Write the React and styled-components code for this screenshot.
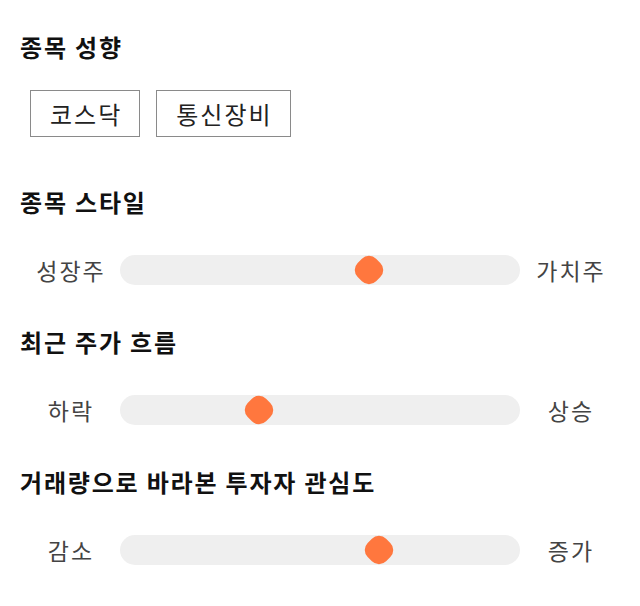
import React from "react";
import styled, { createGlobalStyle } from "styled-components";

const GlobalStyle = createGlobalStyle`
  body {
    margin: 0;
    background: #fff;
    font-family: "Noto Sans CJK KR", "Noto Sans", sans-serif;
  }
`;

const Page = styled.div`
  padding: 32px 20px 0;
  width: 600px;
`;

const Section = styled.section`
  display: flex;
  flex-direction: column;
  margin-bottom: ${(p) => p.$gap || 0}px;
`;

const Heading = styled.h2`
  margin: 0;
  font-size: 24px;
  line-height: 30px;
  letter-spacing: 1.8px;
  font-weight: 700;
  color: #111;
`;

const TagList = styled.div`
  display: flex;
  gap: 16px;
  margin-top: 28px;
  padding-left: 10px;
`;

const Tag = styled.div`
  height: 45px;
  padding: 0 17px 0 19px;
  border: 1px solid #8a8a8a;
  display: flex;
  align-items: center;
  font-size: 24px;
  letter-spacing: 2px;
  color: #222;
`;

const SliderRow = styled.div`
  display: grid;
  grid-template-columns: 100px 1fr 100px;
  align-items: center;
  margin-top: 38px;
`;

const SideLabel = styled.span`
  text-align: center;
  font-size: 23px;
  line-height: 30px;
  letter-spacing: 2px;
  text-indent: 2px;
  color: #444;
`;

const Track = styled.div`
  position: relative;
  height: 30px;
  border-radius: 15px;
  background: #efefef;
`;

const Thumb = styled.div`
  position: absolute;
  top: 50%;
  width: 26px;
  height: 26px;
  border-radius: 10px;
  background: #ff773e;
  transform: translate(-50%, -50%) rotate(45deg);
`;

const sliders = [
  { title: "종목 스타일", left: "성장주", right: "가치주", value: 0.6225 },
  { title: "최근 주가 흐름", left: "하락", right: "상승", value: 0.3475 },
  { title: "거래량으로 바라본 투자자 관심도", left: "감소", right: "증가", value: 0.6475 },
];

export default function App() {
  return (
    <>
      <GlobalStyle />
      <Page>
        <Section $gap={50}>
          <Heading>종목 성향</Heading>
          <TagList>
            <Tag>코스닥</Tag>
            <Tag>통신장비</Tag>
          </TagList>
        </Section>
        {sliders.map((s) => (
          <Section key={s.title} $gap={42}>
            <Heading>{s.title}</Heading>
            <SliderRow>
              <SideLabel>{s.left}</SideLabel>
              <Track>
                <Thumb style={{ left: `${s.value * 100}%` }} />
              </Track>
              <SideLabel>{s.right}</SideLabel>
            </SliderRow>
          </Section>
        ))}
      </Page>
    </>
  );
}
